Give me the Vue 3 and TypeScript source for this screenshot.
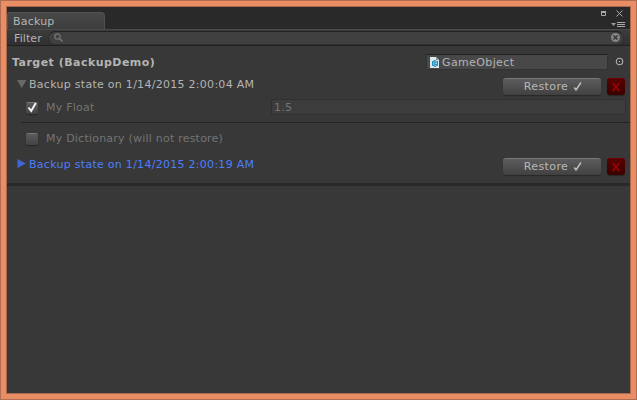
<script setup lang="ts">
import { ref } from 'vue'

interface Property { name: string; checked: boolean; value?: string; note?: string }
interface BackupState { date: string; open: boolean; properties: Property[] }

const filter = ref('')
const states = ref<BackupState[]>([
  {
    date: '1/14/2015 2:00:04 AM',
    open: true,
    properties: [
      { name: 'My Float', checked: true, value: '1.5' },
      { name: 'My Dictionary', checked: false, note: '(will not restore)' },
    ],
  },
  { date: '1/14/2015 2:00:19 AM', open: false, properties: [] },
])
</script>

<template>
  <div class="frame">
    <main class="window">
      <header class="tabs">
        <div class="tab"><span class="tab-name">Backup</span></div>
        <div class="window-tools">
          <svg class="tool-icons" viewBox="0 0 20 22" width="20" height="22">
            <path d="M.5 5.500h4v3h-4z" fill="none" stroke="#aaa" />
            <path d="M0 4h5v2H0z" fill="#aaa" />
            <path d="M15.500 3.500l6 6M21.500 3.500l-6 6" stroke="#aaa" fill="none" />
            <path d="M10 16h5l-2.500 3z" fill="#999" />
            <path d="M16 15.500h8M16 17.500h8M16 19.500h8" stroke="#aaa" />
          </svg>
        </div>
      </header>

      <div class="toolbar">
        <span class="filter-label">Filter</span>
        <div class="search">
          <svg viewBox="0 0 10 10" width="10" height="10">
            <circle cx="3.500" cy="3.500" r="2.700" fill="none" stroke="#777" stroke-width="1.200" />
            <path d="M5.500 5.500l3 3" stroke="#777" stroke-width="1.500" />
          </svg>
          <input v-model="filter" class="search-input" />
          <svg viewBox="0 0 9 9" width="9" height="9">
            <circle cx="4.500" cy="4.500" r="4.500" fill="#858585" />
            <path d="M2.500 2.500l4 4M6.500 2.500l-4 4" stroke="#333" stroke-width="1.300" />
          </svg>
        </div>
      </div>

      <section class="target">
        <span class="target-name">Target (BackupDemo)</span>
        <div class="object-field">
          <svg viewBox="0 0 9 11" width="9" height="11">
            <path d="M0 0h6l3 3v8H0z" fill="#dce8ee" />
            <path d="M6 0v3h3z" fill="#8b979c" />
            <path d="M2 4.500l3-1.500 3 1.500v4L5 10 2 8.500z" fill="#1c86b8" />
            <path d="M7 5L5 4.500 3.500 6v1.500L5 8.500l1.500-.5M5 6.500h2" fill="none" stroke="#a5d8ee" stroke-width=".9" />
          </svg>
          <span class="object-name">GameObject</span>
        </div>
        <svg class="picker" viewBox="0 0 9 9" width="9" height="9">
          <circle cx="4.500" cy="4.500" r="3.200" fill="none" stroke="#b0b0b0" stroke-width="1.100" />
          <path d="M4 4h1v1H4z" fill="#ccc" />
        </svg>
      </section>

      <section v-for="state in states" :key="state.date" class="state">
        <div class="state-head" :class="{ closed: !state.open }">
          <svg class="arrow" viewBox="0 0 10 10" width="10" height="10">
            <path :d="state.open ? 'M0 1h9.500L4.750 9z' : 'M.5 0v9l8.300-4.500z'" fill="currentColor" />
          </svg>
          <span class="state-name">Backup state on {{ state.date }}</span>
          <button class="restore"><span class="restore-text">Restore</span>
            <svg viewBox="0 0 9 10" width="9" height="10"><path d="M1.300 5.500l1.700 2.500L8 .5" fill="none" stroke="#c0c0c0" stroke-width="1.400" /></svg>
          </button>
          <button class="remove">
            <svg viewBox="0 0 8 9" width="8" height="9"><path d="M.7 0l6.600 8M7.300 0L.7 8" stroke="#b00000" stroke-width="1.200" /></svg>
          </button>
        </div>
        <div v-if="state.open" class="properties">
          <div v-for="prop in state.properties" :key="prop.name" class="property">
            <span class="check">
              <svg v-if="prop.checked" viewBox="0 0 12 12" width="12" height="12"><path d="M2.500 5.500l2.700 3.500L9.800 1" fill="none" stroke="#f2f2f2" stroke-width="2" /></svg>
            </span>
            <span class="prop-name">{{ prop.name }} {{ prop.note }}</span>
            <span v-if="prop.value" class="value">{{ prop.value }}</span>
          </div>
        </div>
      </section>
      <div class="end"></div>
    </main>
  </div>
</template>

<style>
body { margin: 0; background: #e98d64; }
</style>

<style scoped>
* { box-sizing: border-box; }
svg { display: block; flex: none; overflow: visible; }
.frame {
  width: 637px; height: 400px; padding: 5px;
  border: 1px solid #b26d50; background: #e98d64;
  font: 11px/14px "DejaVu Sans", Verdana, sans-serif; color: #b4b4b4;
}
.window { height: 388px; border: 1px solid #a9674c; background: #383838; overflow: hidden; }
.tabs { height: 22px; display: flex; align-items: flex-end; justify-content: space-between; background: #292929; }
.tab {
  width: 98px; height: 17px; padding: 2px 0 0 5px; white-space: nowrap;
  border: 1px solid #515151; border-bottom: 0; border-radius: 2px 4px 0 0;
  background: linear-gradient(#484848, #3d3d3d);
}
.tab-name { letter-spacing: .2px; }
.window-tools { width: 29px; height: 22px; }
.toolbar {
  height: 17px; display: flex; align-items: center; padding: 0 6px 0 7px;
  border-top: 1px solid #4a4a4a; border-bottom: 1px solid #202020;
  background: linear-gradient(#3c3c3c, #303030);
}
.filter-label { width: 34px; padding-top: 2px; letter-spacing: .1px; }
.search {
  flex: 1; height: 14px; display: flex; align-items: center; gap: 4px; padding: 0 3px 0 5px;
  border: 1px solid #303030; border-top-color: #222; border-radius: 7px; background: #404040;
}
.search-input { flex: 1; min-width: 0; height: 11px; padding: 0; border: 0; outline: 0; background: none; color: #b4b4b4; font: inherit; }
.target { height: 32px; display: flex; align-items: center; padding: 0 5px 0 5px; }
.target-name { width: 414px; padding-top: 1px; font-weight: bold; letter-spacing: .47px; }
.object-field {
  width: 182px; height: 16px; display: flex; align-items: center; gap: 3px; padding-left: 3px;
  border: 1px solid #333; border-top-color: #1f1f1f; background: #484848;
}
.object-name { padding-top: 1px; letter-spacing: .38px; }
.picker { margin: 0 0 1px 7px; }
.state-head { height: 18px; display: flex; align-items: flex-start; padding: 0 5px 0 10px; color: #b4b4b4; }
.arrow { margin: 1px 2px 0 0; color: #686868; }
.closed .arrow { color: #4066d5; }
.closed { color: #4c7eff; }
.state-name { flex: 1; white-space: nowrap; letter-spacing: .28px; }
.restore, .remove { height: 17px; padding: 0; display: flex; align-items: center; justify-content: center; font: inherit; box-shadow: 0 1px 1px #282828; border: 0; }
.restore {
  width: 98px; gap: 5px; padding-left: 2px; border-top: 1px solid #777; border-radius: 3px;
  background: linear-gradient(#5c5c5c, #414141); color: #b8b8b8;
}
.restore-text { letter-spacing: .4px; }
.remove { width: 18px; margin-left: 6px; border-top: 1px solid #6d0000; border-radius: 3px; background: linear-gradient(#590000, #390000); }
.properties { height: 62px; padding-left: 14px; }
.property { height: 27px; display: flex; align-items: flex-start; padding: 5px 4px 0 5px; }
.property:first-child { border-bottom: 1px solid #242424; }
.property + .property { padding-top: 9px; }
.check {
  flex: none; width: 12px; height: 12px; margin-top: 1px; border-radius: 2px;
  background: linear-gradient(#777 0 1px, #5a5a5a 1px, #424242); box-shadow: 0 1px 1px #262626;
}
.prop-name { flex: none; width: 233px; padding-left: 8px; color: #747474; letter-spacing: .22px; white-space: pre; }
.value { flex: 1; height: 16px; margin-top: -2px; padding: 1px 0 0 2px; border: 1px solid #303030; background: #3c3c3c; color: #747474; letter-spacing: .2px; }
.end { height: 3px; margin-top: 7px; background: #292929; }
</style>
